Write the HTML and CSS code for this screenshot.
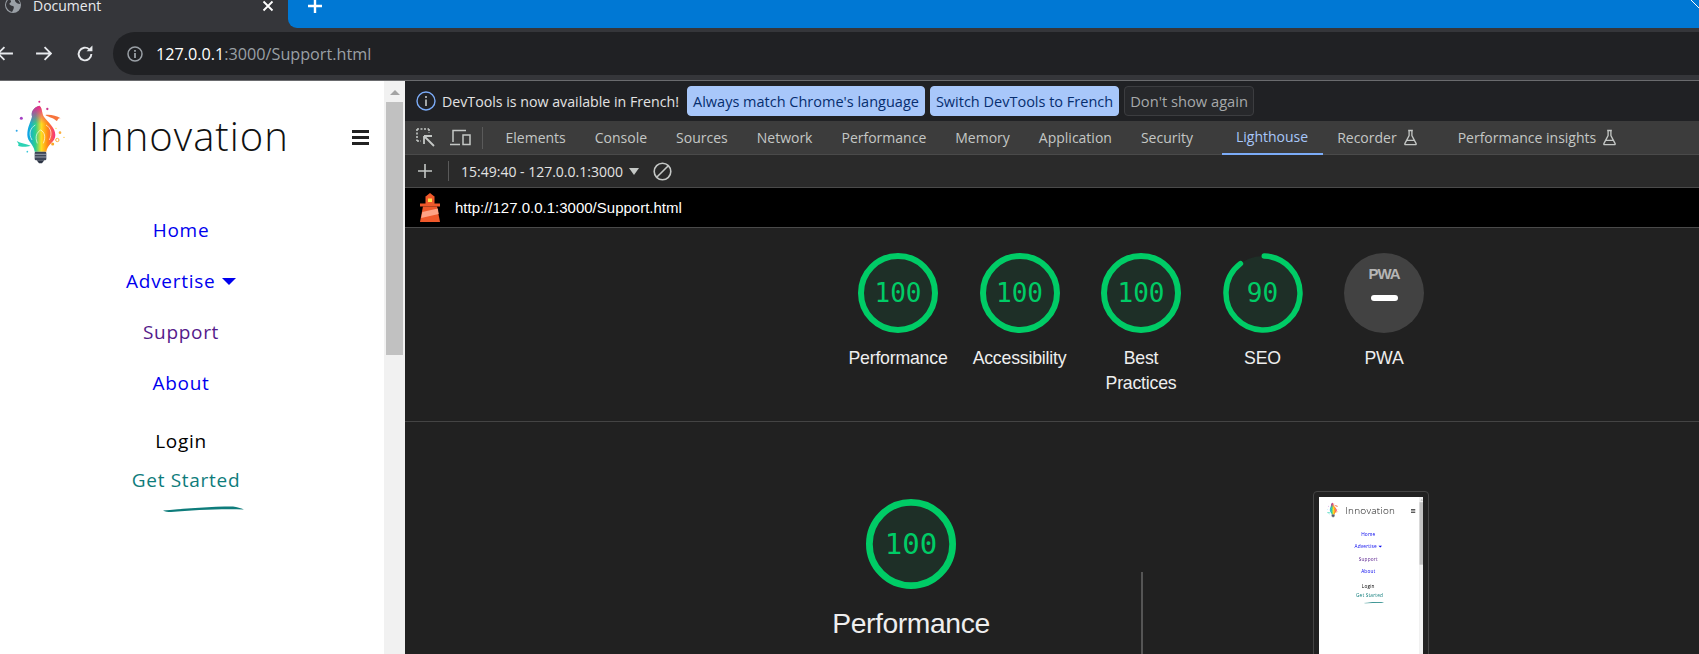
FILE: index.html
```html
<!DOCTYPE html>
<html lang="en">
<head>
    <meta charset="UTF-8">
    <title>Document</title>
    <link rel="stylesheet" href="styles.css">
</head>
<body>
    <!-- shared icons -->
    <svg class="defs" width="0" height="0">
        <defs>
            <linearGradient id="bulb-x" x1="0" x2="1" y1="0" y2="0">
                <stop offset="0" stop-color="#0a9ff0"/>
                <stop offset=".3" stop-color="#2fd08a"/>
                <stop offset=".5" stop-color="#ffdd20"/>
                <stop offset=".72" stop-color="#ff8a14"/>
                <stop offset="1" stop-color="#f62f86"/>
            </linearGradient>
            <linearGradient id="bulb-y" x1="0" x2="0" y1="0" y2="1">
                <stop offset="0" stop-color="#e81f93"/>
                <stop offset=".4" stop-color="#e81f93" stop-opacity="0"/>
            </linearGradient>
            <symbol id="bulb" viewBox="30 45 180 210">
                <path d="M118 62C128 68 124 84 132 96C144 112 166 128 166 150C166 172 141 178 139 200L104 200C102 178 82 170 82 150C82 125 92 112 96 95C92 80 100 68 118 62Z" fill="url(#bulb-x)"/>
                <path d="M118 62C128 68 124 84 132 96C144 112 166 128 166 150C166 172 141 178 139 200L104 200C102 178 82 170 82 150C82 125 92 112 96 95C92 80 100 68 118 62Z" fill="url(#bulb-y)"/>
                <path d="M96 165C84 145 92 128 106 120M148 165C158 145 152 128 138 120M112 175C104 155 110 142 122 135C134 142 138 155 130 175" fill="none" stroke="#fff" stroke-opacity=".65" stroke-width="3"/>
                <rect x="104" y="200" width="35" height="26" rx="4" fill="#3d4658"/>
                <path d="M104 208H139M104 216H139" stroke="#c4cad4" stroke-width="2"/>
                <path d="M110 226H133L126 235H117Z" fill="#2c3444"/>
                <path d="M136 90C150 88 170 92 182 100C170 100 176 106 170 108C160 98 148 98 136 90Z" fill="#f7743c"/>
                <path d="M50 168C62 176 78 176 92 182C80 186 62 186 54 182C58 178 54 174 50 168Z" fill="#2cd3b4"/>
                <circle cx="64" cy="100" r="4.5" fill="#a53fc4"/>
                <circle cx="118" cy="50" r="3" fill="#e0288f"/>
                <circle cx="142" cy="72" r="3.5" fill="#c8388f"/>
                <circle cx="50" cy="137" r="3" fill="#2ea6e8"/>
                <circle cx="180" cy="143" r="4" fill="#fbb040"/>
                <circle cx="172" cy="165" r="5" fill="none" stroke="#fbb040" stroke-width="3"/>
                <circle cx="158" cy="177" r="4.5" fill="#f9a825"/>
                <circle cx="192" cy="157" r="2" fill="#fbc02d"/>
                <circle cx="168" cy="130" r="2" fill="#fdd835"/>
                <circle cx="82" cy="200" r="2.5" fill="#38c8d8"/>
            </symbol>
            <symbol id="flask" viewBox="0 0 16 18">
                <path d="M5.5 1.5H10.500M6.500 1.500V7L2 15.500C1.700 16.200 2 16.500 2.600 16.500H13.400C14 16.500 14.300 16.200 14 15.500L9.500 7V1.500M4.500 12H11.500" fill="none" stroke="#c4c7c5" stroke-width="1.400"/>
            </symbol>
            <symbol id="arrow" viewBox="0 0 16 16">
                <path d="M1 8H15M9 2L15 8L9 14" fill="none" stroke="currentColor" stroke-width="1.700"/>
            </symbol>
        </defs>
    </svg>

    <div class="tabstrip">
        <div class="tab">
            <svg class="tab-globe" width="16" height="16" viewBox="0 0 16 16">
                <circle cx="8" cy="8" r="8" fill="#9aa0a6"/>
                <path d="M3 3C6 2 7 5 5 6C3 7 6 9 8 9C10 10 8 13 7 15C4 14 1 11 1 8C1 6 2 4 3 3ZM10 1C13 2 15 5 15 7C13 7 11 6 10 4Z" fill="#35363a"/>
            </svg>
            <span class="tab-title">Document</span>
            <svg class="tab-close" width="12" height="12" viewBox="0 0 12 12">
                <path d="M1.500 1.500L10.500 10.500M10.500 1.500L1.500 10.500" stroke="#fff" stroke-width="1.800"/>
            </svg>
        </div>
        <div class="tab-rest">
            <svg class="tab-plus" width="16" height="16" viewBox="0 0 16 16">
                <path d="M8 1V15M1 8H15" stroke="#fff" stroke-width="2.400"/>
            </svg>
            <svg class="win-close" width="8" height="8" viewBox="0 0 8 8">
                <path d="M0 0L8 8" stroke="#fff" stroke-width="1"/>
            </svg>
        </div>
    </div>

    <div class="toolbar">
        <svg class="nav-btn back" width="17" height="17"><use href="#arrow" transform="rotate(180 8.500 8.500)"/></svg>
        <svg class="nav-btn" width="17" height="17"><use href="#arrow"/></svg>
        <svg class="nav-btn reload" width="18" height="18" viewBox="0 0 17 17">
            <path d="M14.500 8.500A6 6 0 1 1 12.600 4.100" fill="none" stroke="#e8eaed" stroke-width="1.800"/>
            <path d="M10 5.800H15.500V0.500Z" fill="#e8eaed"/>
        </svg>
        <div class="omnibox">
            <svg width="16" height="16" viewBox="0 0 16 16">
                <circle cx="8" cy="8" r="7" fill="none" stroke="#9aa0a6" stroke-width="1.500"/>
                <path d="M8 7V12M8 4V5.800" stroke="#9aa0a6" stroke-width="1.800"/>
            </svg>
            <span class="omni-url"><span class="omni-host">127.0.0.1</span>:3000/Support.html</span>
        </div>
    </div>

    <div class="split">
        <div class="page">
            <div class="site">
                <header class="site-header">
                    <svg class="site-logo"><use href="#bulb"/></svg>
                    <span class="site-name">Innovation</span>
                    <span class="burger"><i></i><i></i><i></i></span>
                </header>
                <nav class="site-nav">
                    <a class="nav-link">Home</a>
                    <a class="nav-link">Advertise <span class="caret"></span></a>
                    <a class="nav-link visited">Support</a>
                    <a class="nav-link">About</a>
                </nav>
                <div class="site-auth">
                    <a class="login">Login</a>
                    <a class="started">Get Started</a>
                    <svg class="swoosh" width="81" height="6" viewBox="0 0 81 6">
                        <path d="M0 4.500C18 3 45 .5 70 .5C74 1 78 2 81 3.500C60 2.500 30 4 8 6C5 6 2 5.500 0 4.500Z" fill="#0e7c7b"/>
                    </svg>
                </div>
            </div>
            <div class="scrollbar">
                <span class="scroll-up"></span>
                <span class="scroll-thumb"></span>
            </div>
        </div>

        <div class="devtools">
            <div class="infobar">
                <svg width="20" height="20" viewBox="0 0 20 20">
                    <circle cx="10" cy="10" r="9" fill="none" stroke="#7cacf8" stroke-width="1.400"/>
                    <path d="M10 8.500V15M10 5V7" stroke="#c4c7c5" stroke-width="1.600"/>
                </svg>
                <span class="info-text">DevTools is now available in French!</span>
                <button class="info-btn first">Always match Chrome's language</button>
                <button class="info-btn">Switch DevTools to French</button>
                <button class="info-btn ghost">Don't show again</button>
            </div>

            <div class="tabs">
                <svg class="tool-icon" width="19" height="19" viewBox="0 0 19 19">
                    <path d="M1 1H13M1 1V13M1 13H5M13 1V5" fill="none" stroke="#c4c7c5" stroke-width="1.600" stroke-dasharray="2 1.500"/>
                    <path d="M8 8H16M8 8V16M8 8L18 18" fill="none" stroke="#c4c7c5" stroke-width="1.800"/>
                </svg>
                <svg class="tool-icon second" width="21" height="17" viewBox="0 0 21 17">
                    <path d="M3 13V1.500H16M0 15.500H10" fill="none" stroke="#c4c7c5" stroke-width="1.500"/>
                    <rect x="13" y="6" width="7" height="9.500" fill="none" stroke="#c4c7c5" stroke-width="1.500"/>
                </svg>
                <span class="tool-sep"></span>
                <span class="tab-item">Elements</span>
                <span class="tab-item">Console</span>
                <span class="tab-item">Sources</span>
                <span class="tab-item">Network</span>
                <span class="tab-item">Performance</span>
                <span class="tab-item">Memory</span>
                <span class="tab-item">Application</span>
                <span class="tab-item">Security</span>
                <span class="tab-item active">Lighthouse</span>
                <span class="tab-item">Recorder <svg width="15" height="17"><use href="#flask"/></svg></span>
                <span class="tab-item wide">Performance insights <svg width="15" height="17"><use href="#flask"/></svg></span>
            </div>

            <div class="lh-toolbar">
                <svg width="14" height="14" viewBox="0 0 14 14">
                    <path d="M7 0V14M0 7H14" stroke="#c4c7c5" stroke-width="1.600"/>
                </svg>
                <span class="tool-sep"></span>
                <span class="lh-run">15:49:40 - 127.0.0.1:3000</span>
                <span class="lh-caret"></span>
                <svg width="19" height="19" viewBox="0 0 19 19">
                    <circle cx="9.500" cy="9.500" r="8.300" fill="none" stroke="#c4c7c5" stroke-width="1.600"/>
                    <path d="M3.700 15.300L15.300 3.700" stroke="#c4c7c5" stroke-width="1.600"/>
                </svg>
            </div>

            <div class="lh-url">
                <svg width="20" height="29" viewBox="0 0 20 29">
                    <path d="M10 0L15 4H5Z" fill="#f0592b"/>
                    <rect x="5.500" y="4" width="9" height="7" fill="#f0592b"/>
                    <rect x="8" y="5.500" width="4" height="3.500" fill="#ffe14d"/>
                    <rect x="0" y="10.500" width="20" height="3" fill="#f0592b"/>
                    <path d="M3 13.500H17L20 29H0Z" fill="#f0592b"/>
                    <path d="M2.300 19L17.800 15.500L18.700 21L1.200 25Z" fill="#ffa385"/>
                </svg>
                <span>http://127.0.0.1:3000/Support.html</span>
            </div>

            <div class="report">
                <div class="gauges">
                    <div class="gauge-item">
                        <div class="gauge">
                            <svg viewBox="0 0 80 80"><circle class="ring" cx="40" cy="40" r="37"/></svg>
                            <span class="score">100</span>
                        </div>
                        <div class="gauge-label">Performance</div>
                    </div>
                    <div class="gauge-item">
                        <div class="gauge">
                            <svg viewBox="0 0 80 80"><circle class="ring" cx="40" cy="40" r="37"/></svg>
                            <span class="score">100</span>
                        </div>
                        <div class="gauge-label">Accessibility</div>
                    </div>
                    <div class="gauge-item">
                        <div class="gauge">
                            <svg viewBox="0 0 80 80"><circle class="ring" cx="40" cy="40" r="37"/></svg>
                            <span class="score">100</span>
                        </div>
                        <div class="gauge-label">Best<br>Practices</div>
                    </div>
                    <div class="gauge-item">
                        <div class="gauge">
                            <svg viewBox="0 0 80 80">
                                <circle class="ring-fill" cx="40" cy="40" r="37"/>
                                <circle class="ring-part" cx="40" cy="40" r="37" pathLength="100" stroke-dasharray="89 11" transform="rotate(-88 40 40)"/>
                            </svg>
                            <span class="score">90</span>
                        </div>
                        <div class="gauge-label">SEO</div>
                    </div>
                    <div class="gauge-item">
                        <div class="gauge pwa">
                            <span class="pwa-mark">PWA</span>
                            <span class="pwa-dash"></span>
                        </div>
                        <div class="gauge-label">PWA</div>
                    </div>
                </div>

                <div class="section">
                    <div class="section-left">
                        <div class="gauge big">
                            <svg viewBox="0 0 80 80"><circle class="ring" cx="40" cy="40" r="37"/></svg>
                            <span class="score">100</span>
                        </div>
                        <div class="section-title">Performance</div>
                    </div>
                    <div class="section-rule"></div>
                    <div class="shot">
                        <div class="shot-inner">
                            <div class="shot-page">
                                <div class="site">
                                    <header class="site-header">
                                        <svg class="site-logo"><use href="#bulb"/></svg>
                                        <span class="site-name">Innovation</span>
                                        <span class="burger"><i></i><i></i><i></i></span>
                                    </header>
                                    <nav class="site-nav">
                                        <a class="nav-link">Home</a>
                                        <a class="nav-link">Advertise <span class="caret"></span></a>
                                        <a class="nav-link visited">Support</a>
                                        <a class="nav-link">About</a>
                                    </nav>
                                    <div class="site-auth">
                                        <a class="login">Login</a>
                                        <a class="started">Get Started</a>
                                        <svg class="swoosh" width="81" height="6" viewBox="0 0 81 6">
                                            <path d="M0 4.500C18 3 45 .5 70 .5C74 1 78 2 81 3.500C60 2.500 30 4 8 6C5 6 2 5.500 0 4.500Z" fill="#0e7c7b"/>
                                        </svg>
                                    </div>
                                </div>
                                <div class="scrollbar">
                                    <span class="scroll-up"></span>
                                    <span class="scroll-thumb"></span>
                                </div>
                            </div>
                        </div>
                    </div>
                </div>
            </div>
        </div>
    </div>
</body>
</html>
```

FILE: styles.css
```css
* {
    box-sizing: border-box;
}
html, body {
    margin: 0;
    height: 100%;
}
body {
    width: 1699px;
    height: 654px;
    overflow: hidden;
    display: flex;
    flex-direction: column;
    font-family: "Open Sans", sans-serif;
    background: #212121;
}
.defs {
    display: block;
    height: 0;
}

/* Browser chrome */
.tabstrip {
    display: flex;
    height: 28px;
    flex: none;
    background: #35363a;
    overflow: hidden;
}
.tab {
    width: 288px;
    display: flex;
    align-items: flex-start;
    color: #e8eaed;
}
.tab-globe {
    margin: -3px 0 0 5px;
}
.tab-title {
    margin-left: 12px;
    font-size: 14px;
    line-height: 12px;
}
.tab-close {
    margin: 0 0 0 auto;
    margin-right: 14px;
}
.tab-rest {
    flex: 1;
    display: flex;
    justify-content: space-between;
    align-items: flex-start;
    background: #0078d4;
    border-bottom-left-radius: 9px;
}
.tab-plus {
    margin: -2px 0 0 19px;
}
.win-close {
    margin-right: 0;
}
.toolbar {
    display: flex;
    align-items: center;
    height: 53px;
    flex: none;
    background: #35363a;
    border-bottom: 1px solid #6a6b6e;
    color: #e8eaed;
    padding-bottom: 1px;
}
.nav-btn {
    flex: none;
    margin-left: 21px;
}
.nav-btn.back {
    margin-left: -3px;
}
.nav-btn.reload {
    margin-left: 24px;
}
.omnibox {
    flex: 1;
    height: 43px;
    margin-left: 19px;
    display: flex;
    align-items: center;
    gap: 13px;
    padding-left: 14px;
    background: #202124;
    border-radius: 22px 0 0 22px;
}
.omni-url {
    font-size: 16.200px;
    color: #9aa0a6;
}
.omni-host {
    color: #fff;
}
.split {
    flex: 1;
    display: flex;
    min-height: 0;
}

/* Inspected page */
.page {
    width: 405px;
    flex: none;
    display: flex;
    background: #fff;
}
.site {
    width: 384px;
    flex: none;
}
.site-header {
    display: flex;
    align-items: center;
    height: 97px;
    padding-top: 11px;
    padding-left: 10px;
}
.site-logo {
    width: 60px;
    height: 70px;
    flex: none;
}
.site-name {
    margin-left: 19px;
    font-size: 40px;
    font-weight: 300;
    letter-spacing: 1px;
    color: #111;
}
.burger {
    margin-left: auto;
    margin-right: 15px;
    margin-top: 5px;
    display: flex;
    flex-direction: column;
    gap: 3.600px;
}
.burger i {
    display: block;
    width: 17px;
    height: 2.600px;
    background: #222;
}
.site-nav {
    width: 362px;
    margin-top: 39px;
    display: flex;
    flex-direction: column;
    align-items: center;
    gap: 24px;
}
.nav-link {
    font-size: 19px;
    line-height: 27px;
    letter-spacing: .7px;
    color: #0000ee;
}
.nav-link.visited {
    color: #551a8b;
}
.caret {
    display: inline-block;
    vertical-align: 3px;
    margin-left: 1px;
    border-left: 7px solid transparent;
    border-right: 7px solid transparent;
    border-top: 7px solid #0000ee;
}
.site-auth {
    width: 362px;
    margin-top: 31px;
    display: flex;
    flex-direction: column;
    align-items: center;
}
.login {
    font-size: 19px;
    line-height: 27px;
    letter-spacing: .7px;
    color: #000;
}
.started {
    margin-top: 12px;
    margin-left: 10px;
    font-size: 19px;
    line-height: 27px;
    letter-spacing: .7px;
    color: #0e7c7b;
}
.swoosh {
    display: block;
    margin: 12px 0 0 45px;
}
.scrollbar {
    width: 21px;
    flex: none;
    display: flex;
    flex-direction: column;
    align-items: center;
    background: #f1f1f1;
}
.scroll-up {
    margin-top: 9px;
    border-left: 5px solid transparent;
    border-right: 5px solid transparent;
    border-bottom: 5px solid #a3a3a3;
}
.scroll-thumb {
    width: 17px;
    height: 253px;
    margin-top: 7px;
    background: #c1c1c1;
}

/* DevTools */
.devtools {
    flex: 1;
    min-width: 0;
    display: flex;
    flex-direction: column;
}
.infobar {
    display: flex;
    align-items: center;
    height: 40px;
    flex: none;
    padding-left: 11px;
    background: #202124;
}
.info-text {
    margin-left: 6px;
    font-size: 14.200px;
    color: #e3e3e3;
}
.info-btn {
    height: 30px;
    margin-left: 5px;
    padding: 0 5px;
    border: 1px solid #a8c7fa;
    border-radius: 4px;
    background: #a8c7fa;
    color: #062e6f;
    font-family: inherit;
    font-size: 14.500px;
}
.info-btn.first {
    margin-left: 8px;
}
.info-btn.ghost {
    background: #27282b;
    border-color: #3c3d40;
    color: #a6a8aa;
    font-size: 14.700px;
}
.tabs {
    display: flex;
    align-items: center;
    height: 34px;
    flex: none;
    padding-left: 11px;
    background: #3c3c3c;
    border-bottom: 1px solid #4a4a4a;
}
.tool-icon.second {
    margin-left: 15px;
}
.tool-sep {
    width: 1px;
    height: 22px;
    background: #5a5a5a;
    flex: none;
}
.tabs .tool-sep {
    margin: 0 8px 0 11px;
}
.tab-item {
    display: flex;
    align-items: center;
    gap: 6px;
    height: 34px;
    padding: 0 14.500px;
    font-size: 14px;
    color: #c4c7c5;
}
.tab-item.active {
    margin-left: 14px;
    color: #a8c7fa;
    border-bottom: 2px solid #7cacf8;
}
.tab-item.wide {
    margin-left: 11px;
}
.lh-toolbar {
    display: flex;
    align-items: center;
    height: 33px;
    flex: none;
    padding-left: 13px;
    background: #2a2a2a;
    border-bottom: 1px solid #4a4a4a;
}
.lh-toolbar .tool-sep {
    height: 20px;
    margin: 0 12px 0 16px;
}
.lh-run {
    font-size: 14px;
    color: #e3e3e3;
}
.lh-caret {
    margin: 0 14px 0 6px;
    border-left: 5px solid transparent;
    border-right: 5px solid transparent;
    border-top: 7px solid #c4c7c5;
}
.lh-url {
    display: flex;
    align-items: center;
    gap: 15px;
    height: 40px;
    flex: none;
    padding-left: 15px;
    background: #000;
    border-bottom: 1px solid #4a4a4a;
    font-family: "Liberation Sans", sans-serif;
    font-size: 15px;
    color: #fff;
}

/* Lighthouse report */
.report {
    flex: 1;
    min-height: 0;
    background: #212121;
    overflow: hidden;
}
.gauges {
    display: flex;
    justify-content: center;
    height: 194px;
    padding: 25px 0 0 178px;
    border-bottom: 1px solid #444;
}
.gauge-item {
    width: 121.500px;
    display: flex;
    flex-direction: column;
    align-items: center;
}
.gauge {
    display: grid;
    place-items: center;
    width: 80px;
    height: 80px;
}
.gauge > * {
    grid-area: 1 / 1;
}
.gauge svg {
    width: 100%;
    height: 100%;
}
.ring, .ring-fill {
    fill: #1e2f27;
}
.ring {
    stroke: #00cc66;
    stroke-width: 6;
}
.ring-part {
    fill: none;
    stroke: #00cc66;
    stroke-width: 5.500;
    stroke-linecap: round;
}
.score {
    font-family: "DejaVu Sans Mono", monospace;
    font-size: 26px;
    color: #00cc66;
}
.gauge.pwa {
    background: #424242;
    border-radius: 50%;
    grid-template-rows: auto auto;
    align-content: start;
    padding-top: 12px;
}
.gauge.pwa > * {
    grid-area: auto;
}
.pwa-mark {
    font-family: "Liberation Sans", sans-serif;
    font-weight: 700;
    font-size: 15px;
    line-height: 18px;
    letter-spacing: -1px;
    color: #b5b5b5;
}
.pwa-dash {
    width: 27px;
    height: 6px;
    margin-top: 12px;
    border-radius: 3px;
    background: #fff;
}
.gauge-label {
    margin-top: 13px;
    font-family: "Liberation Sans", sans-serif;
    font-size: 17.700px;
    line-height: 25px;
    letter-spacing: -.2px;
    text-align: center;
    color: #eee;
}
.section {
    display: flex;
    align-items: flex-start;
    padding-left: 386px;
}
.section-left {
    width: 240px;
    flex: none;
    display: flex;
    flex-direction: column;
    align-items: center;
    padding-top: 77px;
}
.gauge.big {
    width: 90px;
    height: 90px;
}
.gauge.big .score {
    font-size: 29px;
}
.section-title {
    margin-top: 16px;
    font-family: "Liberation Sans", sans-serif;
    font-size: 28.300px;
    line-height: 36px;
    letter-spacing: -.4px;
    color: #eee;
}
.section-rule {
    width: 2px;
    height: 90px;
    margin: 150px 0 0 110px;
    background: #555;
}
.shot {
    width: 116px;
    height: 170px;
    margin: 69px 0 0 170px;
    padding: 5px 5px 0;
    border: 1px solid #444;
    border-radius: 4px;
}
.shot-inner {
    height: 100%;
    padding-left: 4px;
    background: #fff;
    overflow: hidden;
}
.shot-page {
    display: flex;
    width: 405px;
    height: 660px;
    transform: scale(.25, .247);
    transform-origin: 0 0;
    filter: blur(1.400px);
}
```
